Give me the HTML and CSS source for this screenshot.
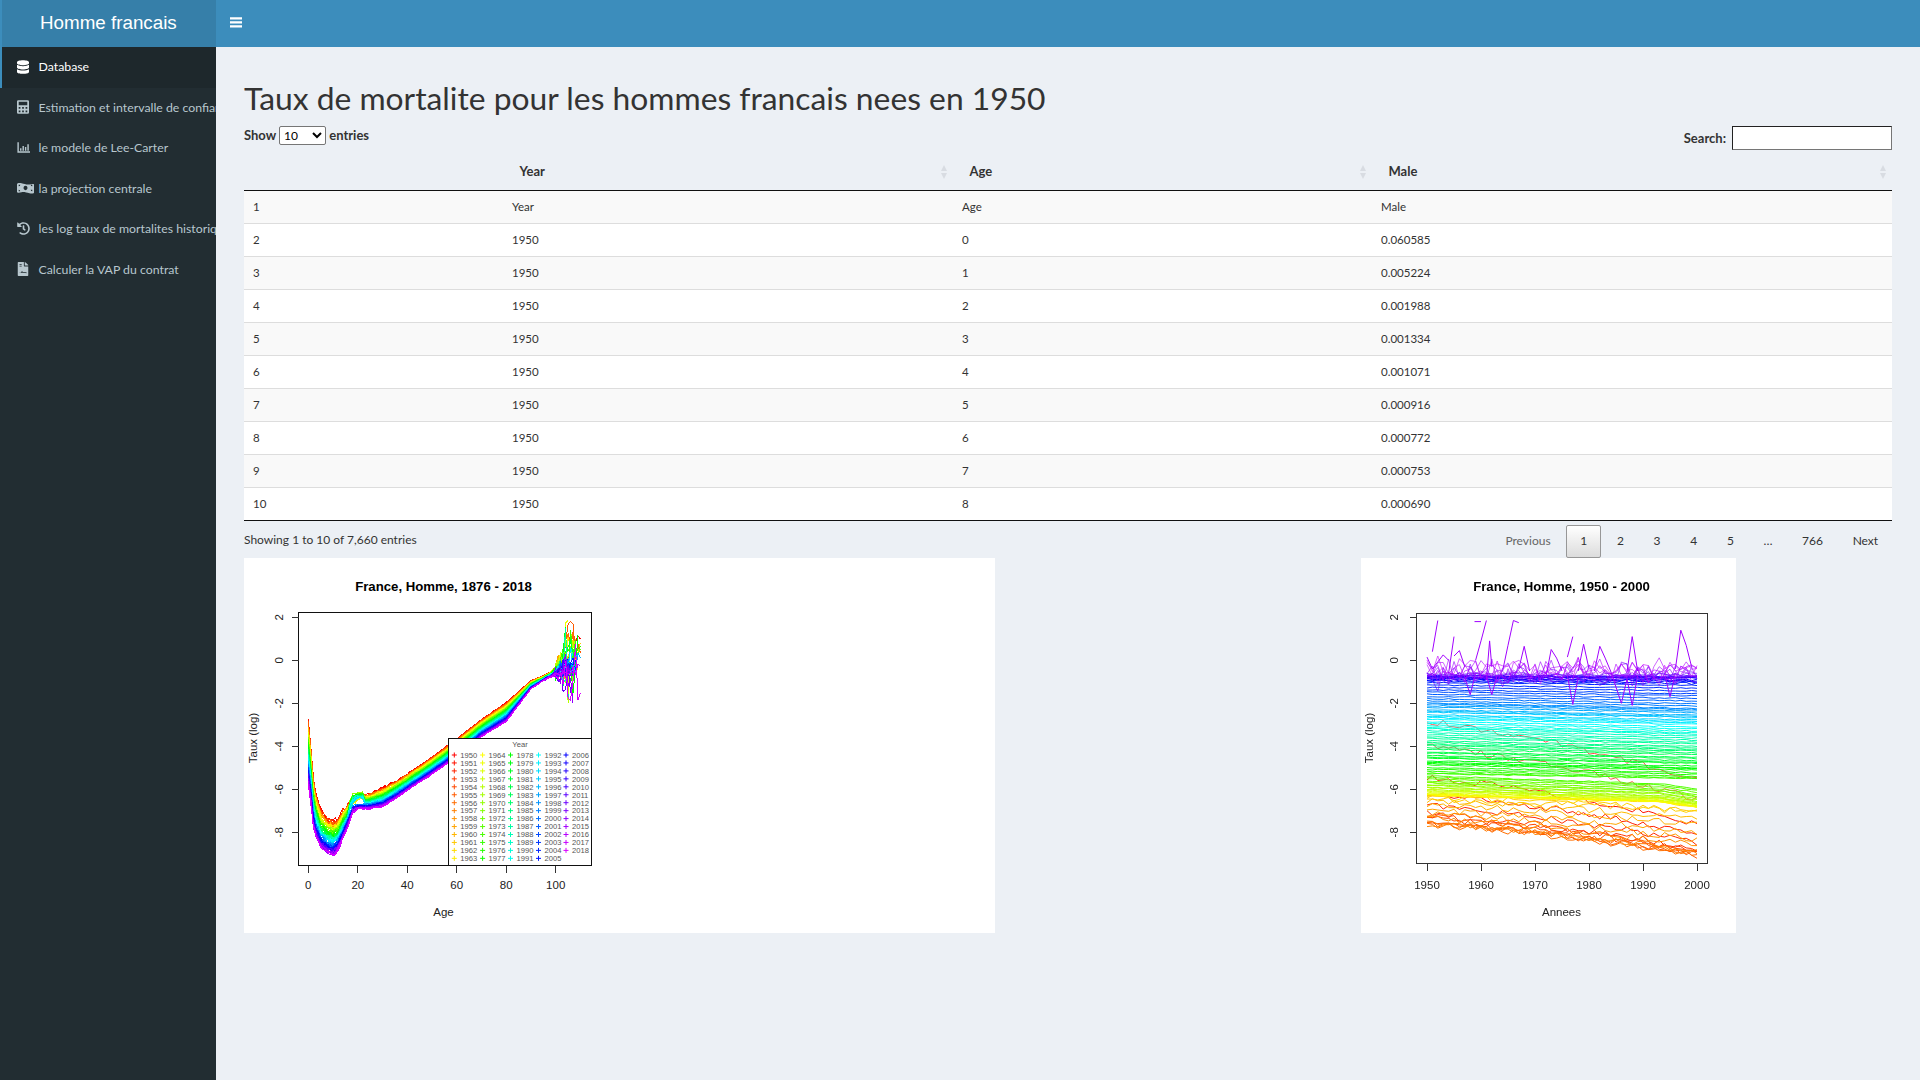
FILE: index.html
```html
<!DOCTYPE html>
<html lang="fr">
<head>
<meta charset="utf-8">
<title>Homme francais</title>
<link rel="stylesheet" href="styles.css">
</head>
<body>
<div class="app">
  <header class="topbar">
    <div class="logo">Homme francais</div>
    <nav class="navbar"><svg class="burger" viewBox="0 0 12 11"><path d="M0 .3h12v2.2H0zM0 4.3h12v2.2H0zM0 8.3h12v2.2H0z"/></svg></nav>
  </header>
  <div class="main">
    <aside class="sidebar">
      <a class="item active"><svg class="ic" viewBox="0 0 448 512"><path d="M448 73v46c0 40-100 73-224 73S0 159 0 119V73C0 33 100 0 224 0s224 33 224 73zm0 103v103c0 40-100 73-224 73S0 319 0 279V176c48 33 136 49 224 49s176-16 224-49zm0 160v103c0 40-100 73-224 73S0 479 0 439V336c48 33 136 49 224 49s176-16 224-49z"/></svg><span>Database</span></a>
      <a class="item"><svg class="ic" viewBox="0 0 448 512"><path fill-rule="evenodd" d="M48 0h352a48 48 0 0 1 48 48v416a48 48 0 0 1-48 48H48a48 48 0 0 1-48-48V48A48 48 0 0 1 48 0zm16 64v128h320V64zm0 192v64h64v-64zm128 0v64h64v-64zm128 0v64h64v-64zM64 384v64h64v-64zm128 0v64h64v-64zm128 0v64h64v-64z"/></svg><span>Estimation et intervalle de confiance</span></a>
      <a class="item"><svg class="ic ic-13" viewBox="0 0 512 512"><path d="M16 48h56v360h440v56H16zM120 288h56v96h-56zM216 192h56v192h-56zM312 240h56v144h-56zM408 128h56v256h-56z"/></svg><span>le modele de Lee-Carter</span></a>
      <a class="item"><svg class="ic ic-wide" viewBox="0 0 640 512"><path fill-rule="evenodd" d="M18 84C60 66 110 64 170 80c120 30 210 60 300 40 50-12 110-30 152-10 12 6 18 14 18 28v290c0 12-6 18-18 24-42 18-92 20-152 4-120-30-210-60-300-40-50 12-110 30-152 10-12-6-18-14-18-28V112c0-12 6-22 18-28zM320 168a74 86 0 1 0 .1 0zM64 130v64a64 64 0 0 0 60-60zM516 320a64 64 0 0 0 60 60v-62zM64 320v60h58a60 60 0 0 0-58-60zM576 132h-60a62 62 0 0 0 60 60z"/></svg><span>la projection centrale</span></a>
      <a class="item"><svg class="ic ic-13" viewBox="0 0 512 512"><path d="M504 255c0 137-111 249-248 249-58 0-111-20-153-53-10-8-11-24-2-33l11-11c8-8 21-9 30-2 31 25 71 39 114 39 102 0 184-83 184-189S358 66 256 66c-49 0-94 19-127 51l51 51c10 10 3 28-12 28H24c-9 0-16-7-16-16V36c0-15 18-22 28-12l49 49C130 30 190 6 256 6c137 0 248 112 248 249zM323 334l10-13c8-11 6-25-4-33l-41-32V152c0-13-11-24-24-24h-16c-13 0-24 11-24 24v135l66 51c11 8 25 6 33-4z"/></svg><span>les log taux de mortalites historiques</span></a>
      <a class="item"><svg class="ic" viewBox="0 0 384 512"><path fill-rule="evenodd" d="M224 136V0H24A24 24 0 0 0 0 24v464a24 24 0 0 0 24 24h336a24 24 0 0 0 24-24V160H248a24 24 0 0 1-24-24zM64 72h80v32H64zm0 64h80v32H64zm60 256c10-30 20-60 34-60 16 0 14 40 30 40 12 0 20-10 36-10s30 14 96 14v32c-70 0-86-14-96-14s-24 10-36 10c-18 0-24-24-30-24-4 0-10 10-14 22H64v-10z"/><path d="M377 105 279 7c-4-4-10-7-17-7h-6v128h128v-6c0-6-3-12-7-17z"/></svg><span>Calculer la VAP du contrat</span></a>
    </aside>
    <main class="content">
      <h1 class="title">Taux de mortalite pour les hommes francais nees en 1950</h1>
      <div class="controls">
        <label class="length">Show <select class="length-select"><option>10</option></select> entries</label>
        <label class="search">Search: <input class="search-input" type="text"></label>
      </div>
      <table class="dt">
        <colgroup><col class="c1"><col class="c2"><col class="c3"><col class="c4"></colgroup>
        <thead><tr><th></th><th>Year<i class="sort"></i></th><th>Age<i class="sort"></i></th><th>Male<i class="sort"></i></th></tr></thead>
        <tbody>
          <tr><td>1</td><td>Year</td><td>Age</td><td>Male</td></tr>
          <tr><td>2</td><td>1950</td><td>0</td><td>0.060585</td></tr>
          <tr><td>3</td><td>1950</td><td>1</td><td>0.005224</td></tr>
          <tr><td>4</td><td>1950</td><td>2</td><td>0.001988</td></tr>
          <tr><td>5</td><td>1950</td><td>3</td><td>0.001334</td></tr>
          <tr><td>6</td><td>1950</td><td>4</td><td>0.001071</td></tr>
          <tr><td>7</td><td>1950</td><td>5</td><td>0.000916</td></tr>
          <tr><td>8</td><td>1950</td><td>6</td><td>0.000772</td></tr>
          <tr><td>9</td><td>1950</td><td>7</td><td>0.000753</td></tr>
          <tr><td>10</td><td>1950</td><td>8</td><td>0.000690</td></tr>
        </tbody>
      </table>
      <div class="dt-foot">
        <div class="info">Showing 1 to 10 of 7,660 entries</div>
        <div class="pager">
          <span class="pg off">Previous</span><span class="pg cur">1</span><span class="pg">2</span><span class="pg">3</span><span class="pg">4</span><span class="pg">5</span><span class="dots">…</span><span class="pg">766</span><span class="pg">Next</span>
        </div>
      </div>
      <div class="plots">
        <div class="plot plot-left"><svg id="plotA" width="751" height="375" viewBox="0 0 751 375"></svg></div>
        <div class="plot plot-right"><svg id="plotB" width="375" height="375" viewBox="0 0 375 375"></svg></div>
      </div>
    </main>
  </div>
</div>
<script src="charts.js"></script>
</body>
</html>
```
FILE: styles.css
```css
* { box-sizing: border-box; }
html, body { margin: 0; height: 100%; }
body { font-family: "Lato", "Noto Sans", sans-serif; font-size: 12px; color: #333; background: #ecf0f5; overflow: hidden; }
.app { width: 1920px; height: 1080px; display: flex; flex-direction: column; }
.topbar { display: flex; height: 47px; flex: none; }
.logo { width: 216px; background: #367fa9; border-left: 2px solid #3c8dbc; color: #fff; font: 18.8px/45px "Liberation Sans", Arial, sans-serif; padding-left: 38px; }
.navbar { flex: 1; background: #3c8dbc; display: flex; align-items: center; padding-left: 14px; }
.burger { width: 12px; height: 11px; fill: #fff; margin-top: -3px; }
.main { flex: 1; display: flex; min-height: 0; }
.sidebar { width: 216px; flex: none; background: #222d32; overflow: hidden; }
.item { display: flex; align-items: center; height: 40.5px; padding: 0 0 1px 16.5px; color: #b8c7ce; white-space: nowrap; font-size: 12.3px; }
.item.active { background: #1e282c; color: #fff; border-left: 2px solid #3c8dbc; padding-left: 14.5px; }
.ic { width: 12px; height: 14px; fill: currentColor; flex: none; margin-right: 10px; }
.ic-13 { width: 13px; height: 13px; margin-right: 9px; }
.ic-wide { width: 17px; margin-right: 5px; }
.content { flex: 1; padding: 0 28px; min-width: 0; }
.title { font-weight: 400; font-size: 31.8px; line-height: 40px; margin: 31px 0 0; color: #333; }
.controls { display: flex; justify-content: space-between; height: 33px; font-weight: 700; font-size: 13px; }
.length { margin-top: 8px; }
.length-select { width: 47px; height: 19px; font: 12px "Lato", sans-serif; margin: 0; background: #fff; border: 1px solid #767676; border-radius: 2px; padding: 0; }
.search { margin-top: 8px; display: flex; align-items: center; height: 24px; gap: 6px; }
.search-input { width: 160px; height: 24px; border: 1px solid #767676; border-top-color: #222; border-left-color: #222; background: #fff; border-radius: 0; padding: 0; }
.dt { width: 1648px; border-collapse: collapse; table-layout: fixed; }
.c1 { width: 259px; } .c2 { width: 450px; } .c3 { width: 419px; } .c4 { width: 520px; }
.dt th { height: 39px; text-align: left; padding: 1px 16.5px 0; position: relative; font-weight: 700; font-size: 13px; border-bottom: 1px solid #111; }
.dt td { height: 33px; padding: 0 9px; font-size: 11.5px; border-bottom: 1px solid #ddd; background: #fff; }
.dt tbody tr:nth-child(odd) td { background: #f9f9f9; }
.dt tbody tr:last-child td { border-bottom: 1px solid #111; }
.sort { position: absolute; right: 5px; top: 14px; width: 7px; height: 14px; }
.sort::before, .sort::after { content: ""; position: absolute; left: 0; border-left: 3.5px solid transparent; border-right: 3.5px solid transparent; }
.sort::before { top: 0; border-bottom: 6px solid #d8dce2; }
.sort::after { bottom: 0; border-top: 6px solid #d8dce2; }
.dt-foot { display: flex; justify-content: space-between; height: 37px; padding-top: 4px; }
.info { padding-top: 7px; }
.pager { display: flex; align-items: flex-start; }
.pg { height: 33px; line-height: 30px; padding: 0 12.85px; margin-left: 2px; border: 1px solid transparent; border-radius: 2px; color: #333; }
.pg.off { color: #666; }
.pg.cur { background: linear-gradient(#fff, #dcdcdc); border-color: #979797; }
.dots { width: 40.5px; text-align: center; line-height: 32px; }
.dots + .pg { margin-left: 0; }
.plots { display: flex; }
.plot { background: #fff; height: 375px; }
.plot-left { width: 751px; }
.plot-right { width: 375px; margin-left: 366px; }
.plot svg { display: block; }
.plot-right svg { filter: blur(0.35px); }
.t { font-family: "Liberation Sans", Arial, sans-serif; fill: #222; }
.tt { font-size: 13.2px; font-weight: 700; fill: #000; }
.ax { font-size: 11.5px; }
.lg { font-size: 7.6px; fill: #555; }
```
FILE: charts.js
```js
(function () {
  var NS = "http://www.w3.org/2000/svg";
  function el(parent, name, attrs, text) {
    var n = document.createElementNS(NS, name);
    for (var k in attrs) n.setAttribute(k, attrs[k]);
    if (text != null) n.textContent = text;
    parent.appendChild(n);
    return n;
  }
  var seed = 12345;
  function rnd() { seed = (seed * 16807) % 2147483647; return seed / 2147483647; }
  function nz() { return rnd() - 0.5; }

  // log mortality at age a: [1950 value, 2018 value]
  var K = [[0,-2.8,-5.7],[1,-4.0,-6.6],[2,-5.4,-7.7],[3,-6.2,-8.2],[5,-7.0,-8.7],[8,-7.4,-9.0],[10,-7.5,-9.05],[12,-7.45,-8.8],[14,-7.0,-8.3],[16,-6.75,-7.7],[18,-6.45,-7.05],[20,-6.3,-6.9],[25,-6.2,-6.9],[30,-5.95,-6.8],[35,-5.65,-6.45],[40,-5.3,-6.05],[50,-4.5,-5.3],[60,-3.65,-4.5],[70,-2.75,-3.55],[80,-1.97,-2.85],[90,-0.95,-1.33],[95,-0.72,-0.95],[100,-0.45,-0.65],[110,-0.3,-0.4]];
  function base(a, t) {
    for (var i = 1; i < K.length; i++) {
      if (a <= K[i][0]) {
        var p = K[i - 1], q = K[i], f = (a - p[0]) / (q[0] - p[0]);
        return (p[1] + (q[1] - p[1]) * f) * (1 - t) + (p[2] + (q[2] - p[2]) * f) * t;
      }
    }
    return K[K.length - 1][1];
  }
  function hsl(h) { return "hsl(" + h + ",100%,50%)"; }

  function frame(svg, c) {
    var i;
    el(svg, "text", { x: c.tx, y: c.ty, "text-anchor": "middle", class: "t tt" }, c.title);
    el(svg, "text", { x: c.tx, y: 358, "text-anchor": "middle", class: "t ax" }, c.xl);
    el(svg, "text", { transform: "translate(" + c.ylx + "," + c.yly + ") rotate(-90)", "text-anchor": "middle", class: "t ax" }, "Taux (log)");
    el(svg, "rect", { x: c.x0, y: c.y0, width: c.x1 - c.x0, height: c.y1 - c.y0, fill: "none", stroke: c.fc, "shape-rendering": "crispEdges" });
    var ys = [2, 0, -2, -4, -6, -8];
    for (i = 0; i < ys.length; i++) {
      var y = c.Y(ys[i]);
      el(svg, "line", { x1: c.x0 - 7, x2: c.x0, y1: y, y2: y, stroke: "#333", "shape-rendering": "crispEdges" });
      el(svg, "text", { transform: "translate(" + c.tlx + "," + y + ") rotate(-90)", "text-anchor": "middle", class: "t ax" }, ys[i]);
    }
    for (i = 0; i < c.xs.length; i++) {
      var x = c.X(c.xs[i]);
      el(svg, "line", { x1: x, x2: x, y1: c.y1, y2: c.y1 + 7, stroke: "#333", "shape-rendering": "crispEdges" });
      el(svg, "text", { x: x, y: 331, "text-anchor": "middle", class: "t ax" }, c.xs[i]);
    }
  }

  // ---- left plot: one aliased line per year, 1950 to 2018
  var A = document.getElementById("plotA");
  var XA = function (a) { return 64.3 + a * 2.474; };
  var YA = function (v) { return 102.3 - v * 21.5; };
  var y, a, pts, v;
  for (y = 0; y < 69; y++) {
    var t = y / 68;
    var amp = 0.2 + Math.pow(rnd(), 3) * 2.2;
    var lift = (1 - t) * rnd() * 1.6;
    var endAge = 101 + Math.floor(rnd() * 10);
    var hump = t > 0.25 && t < 0.65 ? 0.28 : 0;
    pts = [];
    for (a = 0; a <= endAge; a++) {
      var n = a < 20 ? 0.3 * (1 - t * 0.3) : a < 45 ? 0.12 * (1 - t * 0.5) : a < 96 ? 0.04 : 0.1;
      v = base(a, t) + nz() * n;
      if (a >= 17 && a <= 22) v += hump;
      if (a > 97) {
        var g = Math.min(1, (a - 97) / 8);
        v += nz() * amp * g * g * 2 + lift * g * g;
        if (v > 1.85) v = 1.85;
        if (v < -2.1) v = -2.1;
      }
      pts.push(XA(a).toFixed(1) + "," + YA(v).toFixed(1));
    }
    el(A, "polyline", { points: pts.join(" "), fill: "none", stroke: hsl(y * 4.28), "stroke-width": 1, "shape-rendering": "crispEdges" });
  }
  frame(A, { title: "France, Homme, 1876 - 2018", tx: 199.5, ty: 33, xl: "Age", ylx: 12.5, yly: 180, tlx: 39,
    x0: 54.5, x1: 347.5, y0: 54.5, y1: 307.5, fc: "#111", X: XA, Y: YA, xs: [0, 20, 40, 60, 80, 100] });
  // legend
  el(A, "rect", { x: 204.5, y: 180.5, width: 143, height: 127, fill: "#fff", stroke: "#111", "shape-rendering": "crispEdges" });
  el(A, "text", { x: 276, y: 189, "text-anchor": "middle", class: "t lg" }, "Year");
  var colX = [210.3, 238.6, 266.5, 294.5, 322];
  for (y = 0; y < 69; y++) {
    var col = Math.floor(y / 14), row = y % 14;
    var lx = colX[col], ly = 197 + row * 7.95;
    el(A, "path", { d: "M" + (lx - 2.5) + " " + ly + "h5M" + lx + " " + (ly - 2.5) + "v5", stroke: hsl(y * 4.28), fill: "none", "stroke-width": 1 });
    el(A, "text", { x: lx + 6, y: ly + 2.8, class: "t lg" }, 1950 + y);
  }

  // ---- right plot: one line per age across 1950 to 2000
  var B = document.getElementById("plotB");
  var XB = function (yr) { return 66 + (yr - 1950) * 5.4; };
  var YB = function (v) { return 102.3 - v * 21.5; };
  var clipDef = el(el(B, "defs", {}), "clipPath", { id: "fb" });
  el(clipDef, "rect", { x: 55.7, y: 55.7, width: 290.6, height: 250 });
  var gB = el(B, "g", { "clip-path": "url(#fb)" });
  for (a = 0; a <= 110; a++) {
    pts = [];
    var drift = nz() * 0.05;
    for (var yr = 1950; yr <= 2000; yr++) {
      var tt = (yr - 1950) / 50;
      // ages under 20 fall strongly; older ages stay nearly flat
      var k = a < 20 ? tt * (0.6 + tt * 0.4) * 0.95 : a < 40 ? tt * 0.55 : tt * 0.3;
      v = base(a, k) + drift + nz() * (a < 20 ? 0.3 : a < 90 ? 0.05 : 0.1);
      if (a >= 4 && a <= 15) v -= 0.12;
      if (a >= 96) {
        v = -0.85 + (a - 96) * 0.025 + Math.abs(nz()) * (a - 94) * 0.06 - (a > 100 ? rnd() * 0.35 : 0);
        if (a >= 103) v += nz() * 0.9;
      }
      if (a >= 20 && a < 40 && yr > 1993) v -= (yr - 1993) * 0.03;
      pts.push(XB(yr).toFixed(1) + "," + YB(v).toFixed(1));
    }
    el(gB, "polyline", { points: pts.join(" "), fill: "none", stroke: hsl(a * 2.6), "stroke-width": a < 2 ? 0.7 : 1, "stroke-opacity": a >= 98 ? 0.6 : 1 });
  }
  var spikes = [
    [[1951, 0.4], [1952, 1.85]], [[1954, -0.6], [1955, 1.1]], [[1959, 0], [1960, 0.9], [1961, 1.85]],
    [[1958.8, 1.8], [1960, 1.8]], [[1964, -0.5], [1965, 0.7], [1966, 1.85], [1967, 1.75]],
    [[1976, 0.15], [1977, 1.1]], [[1996, -0.4], [1997, 1.4], [1998, 0.7], [1999, -0.3]],
    [[1987, -0.6], [1988, 1.1], [1989, -0.5]], [[1981, -0.5], [1982, 0.65], [1983, 0.1], [1984, -0.5]],
    [[1978, -0.5], [1979, 0.75], [1980, -0.4]], [[1972, -0.8], [1973, 0.5], [1974, 0.1], [1975, -0.5]],
    [[1961, -0.9], [1961.6, 0.9], [1962, -0.3]], [[1967, -0.4], [1968, 0.65], [1969, -0.5]],
    [[1976, -0.7], [1977, -2.05], [1978, -0.8]], [[1984, -0.5], [1986, -2], [1987, -0.9]],
    [[1987, -0.8], [1988, -2.1], [1989, -0.7]], [[1961, -0.7], [1962, -1.6], [1963, -0.7]],
    [[1957, -0.8], [1958, -1.6], [1959, -0.6]], [[1994, -0.6], [1995, -1.7], [1996, -0.6]],
    [[1955, 0.2], [1956, 0.45], [1957, -0.3]], [[1950, 0.15], [1951, -0.4], [1953, 0.25], [1954, 0]]
  ];
  spikes.forEach(function (s) {
    var p = s.map(function (q) { return XB(q[0]).toFixed(1) + "," + YB(q[1]).toFixed(1); }).join(" ");
    el(gB, "polyline", { points: p, fill: "none", stroke: hsl(278), "stroke-width": 1 });
  });
  frame(B, { title: "France, Homme, 1950 - 2000", tx: 200.5, ty: 33, xl: "Annees", ylx: 12, yly: 180, tlx: 37,
    x0: 55.5, x1: 346.5, y0: 55.5, y1: 305.5, fc: "#333", X: XB, Y: YB, xs: [1950, 1960, 1970, 1980, 1990, 2000] });
})();
```
